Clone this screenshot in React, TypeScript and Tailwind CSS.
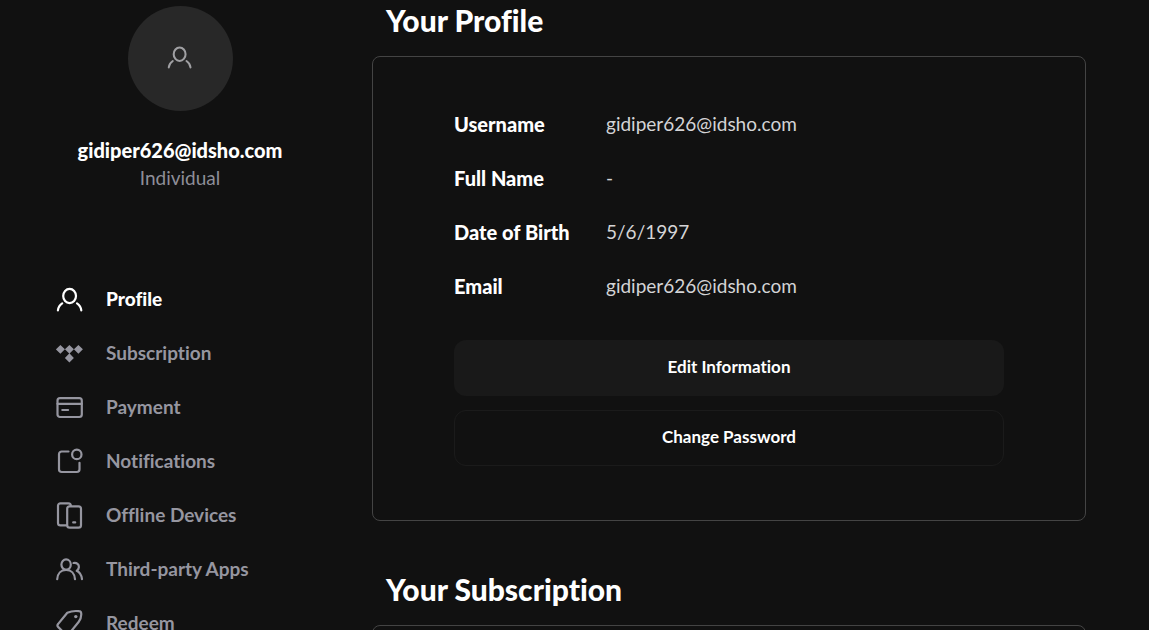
import type { ReactNode } from "react";

function Icon({ children, className = "size-7" }: { children: ReactNode; className?: string }) {
  return (
    <svg
      viewBox="0 0 28 28"
      className={`shrink-0 ${className}`}
      fill="none"
      stroke="currentColor"
      strokeWidth="2.2"
      strokeLinecap="round"
      strokeLinejoin="round"
      aria-hidden="true"
    >
      {children}
    </svg>
  );
}

const person = (
  <>
    <ellipse cx="13.6" cy="11" rx="6.4" ry="7.2" />
    <path d="M1.9 25.3C2.3 22 3.9 19.8 6.2 18.3M21 18.3c2.3 1.5 3.9 3.7 4.3 7" />
  </>
);

const navItems: { label: string; icon: ReactNode }[] = [
  { label: "Profile", icon: person },
  {
    label: "Subscription",
    icon: (
      <path
        fill="currentColor"
        stroke="none"
        d="M4.4 5.9l4.5 4.4 4.5-4.4 4.5 4.4 4.5-4.4 4.5 4.4-4.5 4.5-4.5-4.5-4.3 4.3 4.3 4.4-4.5 4.5-4.5-4.5 4.3-4.4-4.3-4.3-4.5 4.5-4.5-4.5z"
      />
    ),
  },
  {
    label: "Payment",
    icon: (
      <>
        <rect x="1.5" y="5.2" width="24.3" height="18.8" rx="2.5" />
        <path d="M1.5 10.8h24.3M6.3 17h5.8" />
      </>
    ),
  },
  {
    label: "Notifications",
    icon: (
      <>
        <path d="M12.5 4.5H5.7A2.7 2.7 0 0 0 3 7.2v15.1A2.7 2.7 0 0 0 5.7 25h15.1a2.7 2.7 0 0 0 2.7-2.7v-6.5" />
        <circle cx="20.8" cy="7.4" r="4.7" />
      </>
    ),
  },
  {
    label: "Offline Devices",
    icon: (
      <>
        <path d="M10.6 24.4H4.4A2.4 2.4 0 0 1 2 22V4.7a2.4 2.4 0 0 1 2.4-2.4h8a2.4 2.4 0 0 1 2.4 2.4" />
        <rect x="11.2" y="5.3" width="13.8" height="21.4" rx="2.5" />
        <path d="M17.2 21.4h2" />
      </>
    ),
  },
  {
    label: "Third-party Apps",
    icon: (
      <>
        <ellipse cx="10.1" cy="9.6" rx="4.7" ry="5.2" />
        <path d="M1.2 24.2c.3-5.6 3.8-9.4 8.9-9.4s8.6 3.8 8.9 9.4" />
        <path d="M17.5 8c3.4-.6 5.6 1.3 5.4 4.1-.1 1.7-.9 2.8-2.2 3.7 3.3 1.7 4.9 4.2 5.3 8.4" />
      </>
    ),
  },
  {
    label: "Redeem",
    icon: (
      <>
        <path d="M11.3 3.7c3.7-1.6 7.6-2 11.8-1.5 1.2.1 2 .9 2.1 2.1.3 3.3-.4 6-2.6 8.7L12.7 25.2c-1 1.1-2.2 1.1-3.2.1l-7.2-7.2c-1-1-1.1-2.2-.1-3.2z" />
        <circle cx="19.8" cy="7.6" r="1.7" fill="currentColor" stroke="none" />
      </>
    ),
  },
];

const details = [
  ["Username", "gidiper626@idsho.com"],
  ["Full Name", "-"],
  ["Date of Birth", "5/6/1997"],
  ["Email", "gidiper626@idsho.com"],
];

export default function App() {
  return (
    <div className="flex h-screen overflow-hidden bg-[#111111] font-['Lato','Open_Sans',sans-serif] text-white [font-variant-ligatures:none]">
      <aside className="flex w-90 shrink-0 flex-col pt-1.5">
        <div className="flex flex-col items-center">
          <div className="flex size-[105px] items-center justify-center rounded-full bg-[#282828] pb-1 text-[#a0a0a3]">
            <Icon className="size-[26px]">{person}</Icon>
          </div>
          <p className="mt-[26px] text-[20px] leading-[27px] font-black">gidiper626@idsho.com</p>
          <p className="text-[19px] leading-[27px] text-[#8e8e98]">Individual</p>
        </div>
        <nav className="mt-[81px] flex flex-col pl-14">
          {navItems.map(({ label, icon }, i) => (
            <a
              key={label}
              href="#"
              aria-current={i === 0 ? "page" : undefined}
              className={`flex h-[54px] items-center gap-[22px] text-[19px] ${
                i === 0 ? "font-black text-white" : "font-bold text-[#9696a0]"
              }`}
            >
              <Icon>{icon}</Icon>
              <span>{label}</span>
            </a>
          ))}
        </nav>
      </aside>

      <main className="min-w-0 flex-1 pr-[63px] pl-3">
        <section>
          <h2 className="px-3.5 pt-0.5 text-[30px] leading-9 font-black">Your Profile</h2>
          <div className="mt-[18px] rounded-lg border border-[#444444] px-[81px] pt-10 pb-[54px]">
            <dl>
              {details.map(([label, value]) => (
                <div key={label} className="flex h-[54px] items-center text-[19px]">
                  <dt className="w-38 shrink-0 text-[20px] font-black">{label}</dt>
                  <dd className="text-[#d4d4d6]">{value}</dd>
                </div>
              ))}
            </dl>
            <div className="mt-[27px] flex flex-col gap-3.5 text-[17px] font-bold">
              <button type="button" className="h-14 rounded-xl bg-[#191919] pb-0.5">
                Edit Information
              </button>
              <button type="button" className="h-14 rounded-xl border border-[#1b1b1b] pb-0.5">
                Change Password
              </button>
            </div>
          </div>
        </section>
        <section className="mt-12">
          <h2 className="px-3.5 pt-0.5 text-[30px] leading-9 font-black">Your Subscription</h2>
          <div className="mt-[18px] h-60 rounded-lg border border-[#444444]" />
        </section>
      </main>
    </div>
  );
}
